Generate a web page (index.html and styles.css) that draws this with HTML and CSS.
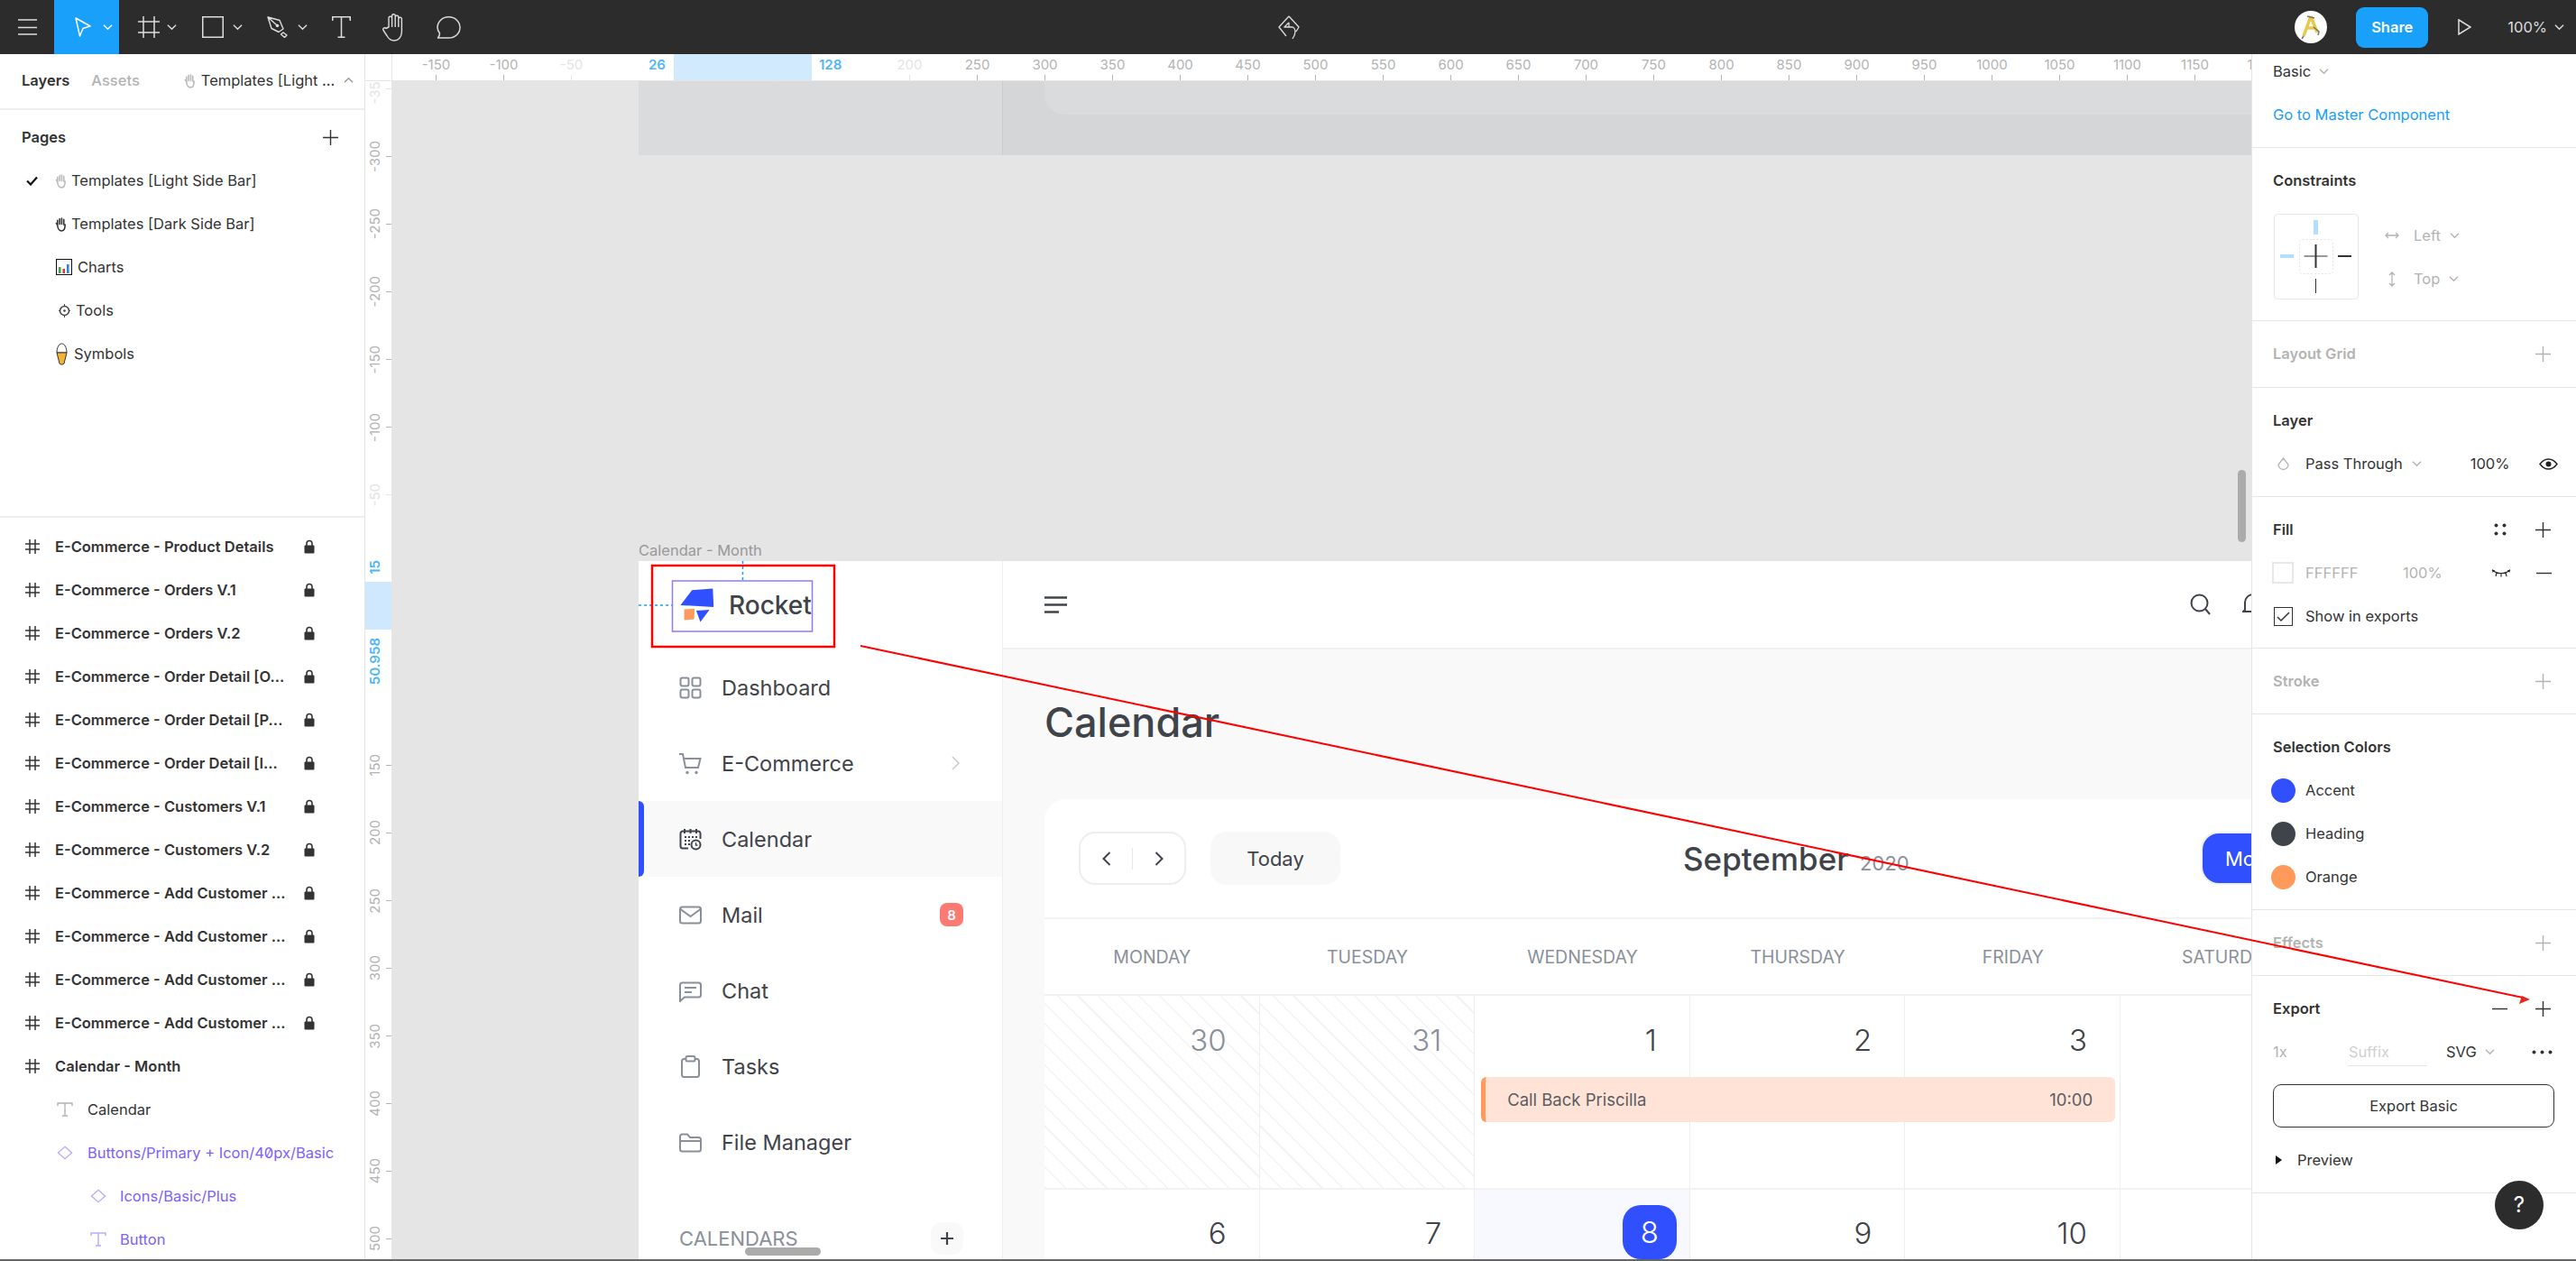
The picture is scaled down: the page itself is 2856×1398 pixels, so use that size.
FILE: index.html
```html
<!DOCTYPE html>
<html lang="en">
  <head>
    <meta charset="UTF-8" />
    <title>Calendar - Month</title>
    <link rel="stylesheet" href="styles.css">
  </head>
  <body>
    <svg class="defs" width="0" height="0">
      <symbol id="chev" viewBox="0 0 12 8"><path d="M1 1.500l5 5 5-5" fill="none" stroke="currentColor" stroke-width="1.500"/></symbol>
      <symbol id="plus" viewBox="0 0 18 18"><path d="M9 0v18M0 9h18" fill="none" stroke="currentColor" stroke-width="1.500"/></symbol>
      <symbol id="minus" viewBox="0 0 18 18"><path d="M0 9h18" fill="none" stroke="currentColor" stroke-width="1.500"/></symbol>
      <symbol id="frame" viewBox="0 0 16 16"><path d="M5 0v16M11 0v16M0 5h16M0 11h16" fill="none" stroke="currentColor" stroke-width="1.500"/></symbol>
      <symbol id="lock" viewBox="0 0 12 16"><path d="M3 7V4.500a3 3 0 0 1 6 0V7" fill="none" stroke="currentColor" stroke-width="1.600"/><rect x="0.500" y="6.500" width="11" height="9" rx="1" fill="currentColor"/></symbol>
      <symbol id="text-t" viewBox="0 0 18 16"><path d="M1 4V1h16v3M9 1v14M6 15h6" fill="none" stroke="currentColor" stroke-width="1.400"/></symbol>
      <symbol id="comp" viewBox="0 0 20 18"><path d="M10 1.500L18.500 9 10 16.500 1.500 9z" fill="none" stroke="currentColor" stroke-width="1.500"/></symbol>
      <symbol id="hand" viewBox="0 0 14 18"><path d="M3 10V4.500M5.500 9V2.500M8 9V2M10.500 9.500V3.500M3 10L1.500 8M3 10c0 4 2 7 5 7s4-3 4-7.500" fill="none" stroke="currentColor" stroke-width="1.700" stroke-linecap="round"/></symbol>
    </svg>

    <div class="app">
      <header class="toolbar">
        <div class="tool tool-menu">
          <svg width="21" height="18" viewBox="0 0 21 18"><path d="M0 1h21M0 9.500h21M0 17h21" stroke="#ddd" stroke-width="1.500"/></svg>
        </div>
        <div class="tool tool-move">
          <svg width="18" height="22" viewBox="0 0 18 22"><path d="M1 1l16 9-8 2.500L5.500 21z" fill="none" stroke="#fff" stroke-width="1.500" stroke-linejoin="round"/></svg>
          <svg class="tool-chev" width="11" height="8"><use href="#chev"/></svg>
        </div>
        <div class="tool tool-frame">
          <svg width="24" height="24" viewBox="0 0 24 24"><path d="M6 0v24M18 0v24M0 6h24M0 18h24" fill="none" stroke="#ddd" stroke-width="1.500"/></svg>
          <svg class="tool-chev" width="11" height="8"><use href="#chev"/></svg>
        </div>
        <div class="tool tool-rect">
          <svg width="24" height="24" viewBox="0 0 24 24"><rect x="0.750" y="0.750" width="22.500" height="22.500" fill="none" stroke="#ddd" stroke-width="1.500"/></svg>
          <svg class="tool-chev" width="11" height="8"><use href="#chev"/></svg>
        </div>
        <div class="tool tool-pen">
          <svg width="23" height="24" viewBox="0 0 23 24"><path d="M1 1l13 3.500 4 9.500-5 3.500-8-4zM1 1l10 9M18 18l4 3-2.500 2.500-4-3.500z" fill="none" stroke="#ddd" stroke-width="1.400" stroke-linejoin="round"/><circle cx="11.500" cy="10.500" r="1.800" fill="#ddd"/></svg>
          <svg class="tool-chev" width="11" height="8"><use href="#chev"/></svg>
        </div>
        <div class="tool tool-text">
          <svg width="21" height="24" viewBox="0 0 21 24"><path d="M.750 5V.750h19.500V5M10.500.750v22.500M6.500 23.250h8" fill="none" stroke="#ddd" stroke-width="1.500"/></svg>
        </div>
        <div class="tool tool-hand">
          <svg width="27" height="31" viewBox="0 0 27 31"><path d="M7 15V5a1.800 1.800 0 0 1 3.600 0v-2.500a1.800 1.800 0 0 1 3.600 0V4a1.800 1.800 0 0 1 3.600 0v2a1.800 1.800 0 0 1 3.600 0v14c0 6-3.500 10-8.500 10-4 0-6-2-8-5.500L1 18.500c-1-2 1.500-3.500 3-2zM10.600 5v10M14.200 3v12M17.800 5v10" fill="none" stroke="#ddd" stroke-width="1.400" stroke-linejoin="round"/></svg>
        </div>
        <div class="tool tool-comment">
          <svg width="27" height="25" viewBox="0 0 27 25"><path d="M1.500 24c1.500-1.500 2-3 2-5C2 17 1 15 1 12.500 1 6 6.500.75 13.500.75S26 6 26 12.500 20.500 24 13.500 24z" fill="none" stroke="#ddd" stroke-width="1.500" stroke-linejoin="round"/></svg>
        </div>
        <div class="tool tool-history">
          <svg width="25" height="27" viewBox="0 0 25 27"><path d="M12 1L1 13l8 10M12 1l11 12-3 5M12 8l-5 5h8c3 0 4 3 4 5s-1 5-3 8M12 8v5" fill="none" stroke="#ddd" stroke-width="1.300" stroke-linejoin="round"/></svg>
        </div>
        <div class="toolbar-right">
          <div class="avatar">
            <svg width="26" height="28" viewBox="0 0 26 28"><path d="M13 2L5 24M13 2l7 18M8 15h10" fill="none" stroke="#e9c94a" stroke-width="3.500"/><path d="M9 2l8 2M5 24l-2 3M16 14l6 5-1 4" fill="none" stroke="#77736a" stroke-width="1.500"/></svg>
          </div>
          <button class="share">Share</button>
          <svg class="play" width="15" height="18" viewBox="0 0 15 18"><path d="M1 1l13 8-13 8z" fill="none" stroke="#ddd" stroke-width="1.500"/></svg>
          <span class="zoom-level">100%</span>
          <svg class="zoom-chev" width="11" height="8"><use href="#chev"/></svg>
        </div>
      </header>

      <div class="workspace">
        <aside class="left-panel">
          <div class="tabs">
            <span class="tab tab-on">Layers</span>
            <span class="tab">Assets</span>
            <span class="tab-page">
              <svg class="hand-pale" width="13" height="17"><use href="#hand"/></svg>
              Templates [Light ...
            </span>
            <svg class="tab-caret" width="11" height="8" viewBox="0 0 12 8"><path d="M1 6.500l5-5 5 5" fill="none" stroke="#999" stroke-width="1.500"/></svg>
          </div>
          <section class="pages">
            <div class="pages-head">
              <span class="strong">Pages</span>
              <svg width="17" height="17"><use href="#plus"/></svg>
            </div>
            <div class="page-row">
              <svg class="page-check" width="13" height="11" viewBox="0 0 13 11"><path d="M1 5.500l4 4 7-8" fill="none" stroke="#111" stroke-width="2.200"/></svg>
              <svg class="page-glyph hand-pale" width="13" height="17"><use href="#hand"/></svg>
              <span>Templates [Light Side Bar]</span>
            </div>
            <div class="page-row">
              <svg class="page-glyph hand-dark" width="13" height="17"><use href="#hand"/></svg>
              <span>Templates [Dark Side Bar]</span>
            </div>
            <div class="page-row">
              <svg class="page-glyph-wide" width="18" height="18" viewBox="0 0 18 18"><rect x="0.500" y="0.500" width="17" height="17" fill="#fff" stroke="#111"/><rect x="3" y="9" width="2.500" height="7" fill="#3fa34d"/><rect x="7.500" y="11" width="2.500" height="5" fill="#e5352b"/><rect x="12" y="6" width="2.500" height="10" fill="#2d7fe0"/></svg>
              <span>Charts</span>
            </div>
            <div class="page-row">
              <svg class="page-gear" width="13" height="15" viewBox="0 0 13 15"><circle cx="6.500" cy="7.500" r="5" fill="none" stroke="#444" stroke-width="1.500"/><circle cx="6.500" cy="7.500" r="1.300" fill="#444"/><path d="M6.500 0v2.500M6.500 12.500V15M0 7.500h1.500M11.500 7.500H13" stroke="#444"/></svg>
              <span>Tools</span>
            </div>
            <div class="page-row">
              <svg class="page-glyph-cone" width="13" height="25" viewBox="0 0 13 25"><path d="M1 11c0-5 2-10 5.500-10S12 6 12 11z" fill="#fff" stroke="#333"/><path d="M1 11h11l-3 12c-1 1.500-4 1.500-5 0z" fill="#f5b335" stroke="#333"/></svg>
              <span>Symbols</span>
            </div>
          </section>
          <ul class="layers">
            <li class="layer layer-frame"><svg width="16" height="16"><use href="#frame"/></svg><span>E-Commerce - Product Details</span><svg class="lock" width="12" height="16"><use href="#lock"/></svg></li>
            <li class="layer layer-frame"><svg width="16" height="16"><use href="#frame"/></svg><span>E-Commerce - Orders V.1</span><svg class="lock" width="12" height="16"><use href="#lock"/></svg></li>
            <li class="layer layer-frame"><svg width="16" height="16"><use href="#frame"/></svg><span>E-Commerce - Orders V.2</span><svg class="lock" width="12" height="16"><use href="#lock"/></svg></li>
            <li class="layer layer-frame"><svg width="16" height="16"><use href="#frame"/></svg><span>E-Commerce - Order Detail [O...</span><svg class="lock" width="12" height="16"><use href="#lock"/></svg></li>
            <li class="layer layer-frame"><svg width="16" height="16"><use href="#frame"/></svg><span>E-Commerce - Order Detail [P...</span><svg class="lock" width="12" height="16"><use href="#lock"/></svg></li>
            <li class="layer layer-frame"><svg width="16" height="16"><use href="#frame"/></svg><span>E-Commerce - Order Detail [I...</span><svg class="lock" width="12" height="16"><use href="#lock"/></svg></li>
            <li class="layer layer-frame"><svg width="16" height="16"><use href="#frame"/></svg><span>E-Commerce - Customers V.1</span><svg class="lock" width="12" height="16"><use href="#lock"/></svg></li>
            <li class="layer layer-frame"><svg width="16" height="16"><use href="#frame"/></svg><span>E-Commerce - Customers V.2</span><svg class="lock" width="12" height="16"><use href="#lock"/></svg></li>
            <li class="layer layer-frame"><svg width="16" height="16"><use href="#frame"/></svg><span>E-Commerce - Add Customer ...</span><svg class="lock" width="12" height="16"><use href="#lock"/></svg></li>
            <li class="layer layer-frame"><svg width="16" height="16"><use href="#frame"/></svg><span>E-Commerce - Add Customer ...</span><svg class="lock" width="12" height="16"><use href="#lock"/></svg></li>
            <li class="layer layer-frame"><svg width="16" height="16"><use href="#frame"/></svg><span>E-Commerce - Add Customer ...</span><svg class="lock" width="12" height="16"><use href="#lock"/></svg></li>
            <li class="layer layer-frame"><svg width="16" height="16"><use href="#frame"/></svg><span>E-Commerce - Add Customer ...</span><svg class="lock" width="12" height="16"><use href="#lock"/></svg></li>
            <li class="layer layer-frame"><svg width="16" height="16"><use href="#frame"/></svg><span>Calendar - Month</span></li>
            <li class="layer depth-1 layer-text"><svg width="18" height="16"><use href="#text-t"/></svg><span>Calendar</span></li>
            <li class="layer depth-1 layer-comp"><svg width="18" height="16"><use href="#comp"/></svg><span>Buttons/Primary + Icon/40px/Basic</span></li>
            <li class="layer depth-2 layer-comp"><svg width="18" height="16"><use href="#comp"/></svg><span>Icons/Basic/Plus</span></li>
            <li class="layer depth-2 layer-comp layer-comp-text"><svg width="18" height="16"><use href="#text-t"/></svg><span>Button</span></li>
          </ul>
        </aside>

        <main class="stage">
          <div class="ruler-corner"></div>
          <div class="ruler-top">
            <span class="mark">-150</span><span class="mark">-100</span><span class="mark mark-faint">-50</span>
            <span class="mark mark-off"></span><span class="mark mark-off"></span><span class="mark mark-faint">100</span><span class="mark mark-off"></span>
            <span class="mark mark-faint">200</span>
            <span class="mark">250</span><span class="mark">300</span><span class="mark">350</span><span class="mark">400</span><span class="mark">450</span>
            <span class="mark">500</span><span class="mark">550</span><span class="mark">600</span><span class="mark">650</span><span class="mark">700</span>
            <span class="mark">750</span><span class="mark">800</span><span class="mark">850</span><span class="mark">900</span><span class="mark">950</span>
            <span class="mark">1000</span><span class="mark">1050</span><span class="mark">1100</span><span class="mark">1150</span><span class="mark">1200</span>
            <div class="band-top"></div>
            <span class="pick pick-26">26</span>
            <span class="pick pick-128">128</span>
          </div>
          <div class="ruler-left">
            <div class="v-list">
              <span class="vmark mark-faint"><b>-350</b></span><span class="vmark"><b>-300</b></span><span class="vmark"><b>-250</b></span><span class="vmark"><b>-200</b></span>
              <span class="vmark"><b>-150</b></span><span class="vmark"><b>-100</b></span><span class="vmark mark-faint"><b>-50</b></span>
              <span class="vmark mark-off"></span><span class="vmark mark-off"></span><span class="vmark mark-off"></span>
              <span class="vmark"><b>150</b></span><span class="vmark"><b>200</b></span><span class="vmark"><b>250</b></span><span class="vmark"><b>300</b></span>
              <span class="vmark"><b>350</b></span><span class="vmark"><b>400</b></span><span class="vmark"><b>450</b></span><span class="vmark"><b>500</b></span>
            </div>
            <div class="band-left"></div>
            <span class="vpick vpick-15">15</span>
            <span class="vpick vpick-h">50.958</span>
          </div>

          <div class="canvas">
            <div class="old-frame">
              <div class="old-side"></div>
              <div class="old-main"><div class="old-top"></div></div>
            </div>
            <div class="frame-label">Calendar - Month</div>

            <div class="design">
              <nav class="sidebar">
                <div class="logo">
                  <svg width="38" height="38" viewBox="0 0 38 38"><path d="M.4 18.900L13.300 2.200 36.300.6l.9 20.300z" fill="#304ffe"/><path d="M17.900 25.100L32.600 24 22.500 37.600z" fill="#304ffe"/><path d="M4.600 23.500L16 22.900 15.600 34.500 4.600 35.500z" fill="#ff9a5a"/></svg>
                  <span>Rocket</span>
                </div>
                <a class="nav-row">
                  <svg width="25" height="25" viewBox="0 0 25 25"><g fill="none" stroke="#8a9099" stroke-width="2"><rect x="1.500" y="1.500" width="9" height="9" rx="2"/><rect x="14.500" y="1.500" width="9" height="9" rx="2"/><rect x="1.500" y="14.500" width="9" height="9" rx="2"/><rect x="14.500" y="14.500" width="9" height="9" rx="2"/></g></svg>
                  <span>Dashboard</span>
                </a>
                <a class="nav-row">
                  <svg width="25" height="25" viewBox="0 0 25 25"><path d="M0 2h4l3 15h14l2.500-10H5" fill="none" stroke="#8a9099" stroke-width="2"/><circle cx="9" cy="22.500" r="1.700" fill="#8a9099"/><circle cx="19" cy="22.500" r="1.700" fill="#8a9099"/></svg>
                  <span>E-Commerce</span>
                  <svg class="nav-arrow" width="9" height="16" viewBox="0 0 9 16"><path d="M1 1l7 7-7 7" fill="none" stroke="#c5c8ce" stroke-width="1.500"/></svg>
                </a>
                <a class="nav-row nav-active">
                  <svg width="25" height="25" viewBox="0 0 25 25"><path d="M10 22.500H4a2.500 2.500 0 0 1-2.500-2.500V6A2.500 2.500 0 0 1 4 3.500h17A2.500 2.500 0 0 1 23.500 6v6M6 1v5M12.500 1v5M19 1v5" fill="none" stroke="#3f434a" stroke-width="2"/><path d="M6 10h2M10 10h2M14 10h2M18 10h2M6 14h2M10 14h2M6 18h2M10 18h2" stroke="#3f434a" stroke-width="2"/><circle cx="18.500" cy="18.500" r="5" fill="#f9f9fa" stroke="#3f434a" stroke-width="2"/><path d="M18.500 16v3h2" fill="none" stroke="#3f434a" stroke-width="1.300"/></svg>
                  <span>Calendar</span>
                </a>
                <a class="nav-row">
                  <svg width="25" height="25" viewBox="0 0 25 25"><rect x="1" y="3.500" width="23" height="18" rx="2.500" fill="none" stroke="#8a9099" stroke-width="2"/><path d="M1.500 6l11 8 11-8" fill="none" stroke="#8a9099" stroke-width="2"/></svg>
                  <span>Mail</span>
                  <span class="nav-badge">8</span>
                </a>
                <a class="nav-row">
                  <svg width="25" height="25" viewBox="0 0 25 25"><path d="M1 24V6a2.500 2.500 0 0 1 2.500-2.500h18A2.500 2.500 0 0 1 24 6v11a2.500 2.500 0 0 1-2.500 2.500H6z" fill="none" stroke="#8a9099" stroke-width="2"/><path d="M6 9h13M6 14h8" stroke="#8a9099" stroke-width="2"/></svg>
                  <span>Chat</span>
                </a>
                <a class="nav-row">
                  <svg width="25" height="25" viewBox="0 0 25 25"><path d="M7 4H5.500A2.500 2.500 0 0 0 3 6.500v15A2.500 2.500 0 0 0 5.500 24h14a2.500 2.500 0 0 0 2.500-2.500v-15A2.500 2.500 0 0 0 19.500 4H18" fill="none" stroke="#8a9099" stroke-width="2"/><rect x="7.500" y="1" width="10" height="5.500" rx="1.500" fill="none" stroke="#8a9099" stroke-width="2"/></svg>
                  <span>Tasks</span>
                </a>
                <a class="nav-row">
                  <svg width="25" height="25" viewBox="0 0 25 25"><path d="M1 6a2.500 2.500 0 0 1 2.500-2.500H9l3 3.500h9.500A2.500 2.500 0 0 1 24 9.500v10.500a2.500 2.500 0 0 1-2.500 2.500h-18A2.500 2.500 0 0 1 1 20zM1 11h23" fill="none" stroke="#8a9099" stroke-width="2"/></svg>
                  <span>File Manager</span>
                </a>
                <div class="cal-head">
                  <span>CALENDARS</span>
                  <span class="cal-add"><svg width="14" height="14" viewBox="0 0 14 14"><path d="M7 0v14M0 7h14" stroke="#3f434a" stroke-width="2.200"/></svg></span>
                </div>
              </nav>

              <div class="content">
                <div class="content-head">
                  <svg width="25" height="19" viewBox="0 0 25 19"><path d="M0 1.500h25M0 9.500h25M0 17.500h16" stroke="#3f434a" stroke-width="2.600"/></svg>
                  <svg class="head-search" width="23" height="24" viewBox="0 0 23 24"><circle cx="10.500" cy="10.500" r="9" fill="none" stroke="#3f434a" stroke-width="2"/><path d="M17 17l5 6" stroke="#3f434a" stroke-width="2"/></svg>
                  <svg class="head-bell" width="24" height="24" viewBox="0 0 24 24"><path d="M3 18V10a9 9 0 0 1 18 0v8l2 2H1z" fill="none" stroke="#3f434a" stroke-width="2"/></svg>
                </div>
                <div class="content-body">
                  <h1 class="page-title">Calendar</h1>
                  <div class="card">
                    <div class="card-head">
                      <div class="pager">
                        <svg width="10" height="16" viewBox="0 0 10 16"><path d="M8.500 1l-7 7 7 7" fill="none" stroke="#3f434a" stroke-width="2"/></svg>
                        <i></i>
                        <svg width="10" height="16" viewBox="0 0 10 16"><path d="M1.500 1l7 7-7 7" fill="none" stroke="#3f434a" stroke-width="2"/></svg>
                      </div>
                      <button class="today">Today</button>
                      <h2 class="month">September <small>2020</small></h2>
                      <button class="month-btn">Month</button>
                    </div>
                    <div class="weekdays">
                      <span>MONDAY</span><span>TUESDAY</span><span>WEDNESDAY</span><span>THURSDAY</span><span>FRIDAY</span><span>SATURDAY</span><span>SUNDAY</span>
                    </div>
                    <div class="weeks">
                      <div class="day day-old">30</div>
                      <div class="day day-old">31</div>
                      <div class="day">1
                        <div class="event"><span>Call Back Priscilla</span><span>10:00</span></div>
                      </div>
                      <div class="day">2</div>
                      <div class="day">3</div>
                      <div class="day"></div>
                      <div class="day"></div>
                      <div class="day day-low">6</div>
                      <div class="day day-low">7</div>
                      <div class="day day-low day-today"><b>8</b></div>
                      <div class="day day-low">9</div>
                      <div class="day day-low">10</div>
                      <div class="day day-low"></div>
                      <div class="day day-low"></div>
                    </div>
                  </div>
                </div>
              </div>
            </div>

            <div class="scroll-v"></div>
            <div class="scroll-h"></div>
          </div>
        </main>

        <aside class="right-panel">
          <section class="prop prop-top">
            <div class="prop-row row-basic">Basic <svg class="dim-chev" width="11" height="8"><use href="#chev"/></svg></div>
            <div class="prop-row prop-link">Go to Master Component</div>
          </section>
          <section class="prop prop-constraints">
            <div class="prop-title">Constraints</div>
            <div class="constraints">
              <svg width="94" height="95" viewBox="0 0 94 95">
                <rect x="0.500" y="0.500" width="93" height="94" rx="4" fill="#fff" stroke="#e5e5e5"/>
                <rect x="28.500" y="28.500" width="37" height="38" rx="3" fill="none" stroke="#e5e5e5" stroke-dasharray="2 2"/>
                <rect x="44" y="7" width="5" height="16" fill="#b3dffe"/>
                <rect x="7" y="45" width="15" height="4" fill="#b3dffe"/>
                <rect x="71" y="46" width="15" height="2" fill="#333"/>
                <rect x="46" y="72" width="1" height="16" fill="#333"/>
                <path d="M33.500 47h26" stroke="#333" stroke-width="1"/>
                <path d="M46.500 34v26" stroke="#333" stroke-width="2"/>
              </svg>
              <div class="constraint-picks">
                <div class="cpick">
                  <svg width="16" height="10" viewBox="0 0 16 10"><path d="M1 5h14M4 2L1 5l3 3M12 2l3 3-3 3" fill="none" stroke="#b3b3b3" stroke-width="1.300"/></svg>
                  <span>Left</span><svg class="dim-chev" width="11" height="8"><use href="#chev"/></svg>
                </div>
                <div class="cpick">
                  <svg width="16" height="17" viewBox="0 0 16 17"><path d="M8 1v15M5 4l3-3 3 3M5 13l3 3 3-3" fill="none" stroke="#b3b3b3" stroke-width="1.300"/></svg>
                  <span>Top</span><svg class="dim-chev" width="11" height="8"><use href="#chev"/></svg>
                </div>
              </div>
            </div>
          </section>
          <section class="prop prop-grid prop-off">
            <div class="prop-title">Layout Grid<svg class="sec-plus" width="17" height="17"><use href="#plus"/></svg></div>
          </section>
          <section class="prop prop-layer">
            <div class="prop-title">Layer</div>
            <div class="prop-row">
              <svg class="drop" width="13" height="15" viewBox="0 0 13 15"><path d="M6.500 1L12 8a5.500 5.500 0 0 1-11 0z" fill="none" stroke="#b3b3b3" stroke-width="1.300"/></svg>
              <span>Pass Through</span>
              <svg class="dim-chev" width="11" height="8"><use href="#chev"/></svg>
              <span class="pct">100%</span>
              <svg class="eye" width="21" height="13" viewBox="0 0 21 13"><path d="M1 6.500C4 2.500 7 1 10.500 1S17 2.500 20 6.500C17 10.500 14 12 10.500 12S4 10.500 1 6.500z" fill="none" stroke="#222" stroke-width="1.400"/><circle cx="10.500" cy="6.500" r="3" fill="#222"/></svg>
            </div>
          </section>
          <section class="prop prop-fill">
            <div class="prop-title">Fill
              <svg class="sec-dots" width="14" height="14" viewBox="0 0 14 14"><g fill="#333"><circle cx="2.500" cy="2.500" r="2"/><circle cx="11.500" cy="2.500" r="2"/><circle cx="2.500" cy="11.500" r="2"/><circle cx="11.500" cy="11.500" r="2"/></g></svg>
              <svg class="sec-plus" width="17" height="17"><use href="#plus"/></svg>
            </div>
            <div class="prop-row row-fill">
              <i class="swatch"></i>
              <span class="hex">FFFFFF</span>
              <span class="hex-pct">100%</span>
              <svg class="eye-shut" width="22" height="10" viewBox="0 0 22 10"><path d="M1 2c3 2.500 6 3.500 10 3.500S18 4.500 21 2M1 2l3 1M21 2l-3 1M6 5l-1 4M11 6v3.500M16 5l1 4M1 4l3-1M21 4l-3-1" fill="none" stroke="#222" stroke-width="1.100"/></svg>
              <svg class="row-minus" width="17" height="17"><use href="#minus"/></svg>
            </div>
            <div class="prop-row">
              <svg class="check" width="21" height="21" viewBox="0 0 21 21"><rect x="0.500" y="0.500" width="20" height="20" fill="#fff" stroke="#333"/><path d="M4 11l4 4 9-9" fill="none" stroke="#333" stroke-width="1.500"/></svg>
              <span>Show in exports</span>
            </div>
          </section>
          <section class="prop prop-short prop-off">
            <div class="prop-title">Stroke<svg class="sec-plus" width="17" height="17"><use href="#plus"/></svg></div>
          </section>
          <section class="prop prop-colors">
            <div class="prop-title">Selection Colors</div>
            <div class="prop-row"><i class="dot dot-accent"></i>Accent</div>
            <div class="prop-row"><i class="dot dot-heading"></i>Heading</div>
            <div class="prop-row"><i class="dot dot-orange"></i>Orange</div>
          </section>
          <section class="prop prop-short prop-off">
            <div class="prop-title">Effects<svg class="sec-plus" width="17" height="17"><use href="#plus"/></svg></div>
          </section>
          <section class="prop prop-export">
            <div class="prop-title">Export
              <svg class="sec-minus" width="17" height="17"><use href="#minus"/></svg>
              <svg class="sec-plus" width="17" height="17"><use href="#plus"/></svg>
            </div>
            <div class="prop-row row-export">
              <span class="scale">1x</span>
              <span class="suffix">Suffix</span>
              <span class="fmt">SVG</span>
              <svg class="dim-chev" width="11" height="8"><use href="#chev"/></svg>
              <svg class="more" width="23" height="5" viewBox="0 0 23 5"><g fill="#333"><circle cx="2.500" cy="2.500" r="2"/><circle cx="11.500" cy="2.500" r="2"/><circle cx="20.500" cy="2.500" r="2"/></g></svg>
            </div>
            <button class="export-btn">Export Basic</button>
            <div class="prop-row row-preview">
              <svg width="7" height="10" viewBox="0 0 7 10"><path d="M0 0l7 5-7 5z" fill="#111"/></svg>
              <span>Preview</span>
            </div>
          </section>
        </aside>
      </div>

      <div class="help">?</div>

      <svg class="marks" width="2856" height="1398" viewBox="0 0 2856 1398">
        <path d="M708 671h37M823.500 622v21" fill="none" stroke="#18a0fb" stroke-width="1.500" stroke-dasharray="3 3"/>
        <rect x="745.500" y="644" width="155" height="56" fill="none" stroke="#8c7bff" stroke-width="1.500"/>
        <rect x="723" y="627" width="202" height="90" fill="none" stroke="#f00" stroke-width="2.500"/>
        <path d="M954 716L2797 1106" stroke="#f00" stroke-width="2"/>
        <path d="M2805 1108l-9-4-3 9z" fill="#e0281c"/>
      </svg>
    </div>
  </body>
</html>
```

FILE: styles.css
```css
* {
  box-sizing: border-box;
}
html,
body {
  margin: 0;
  height: 100%;
  overflow: hidden;
}
body {
  font-family: Inter, "Liberation Sans", sans-serif;
  font-size: 16.5px;
  color: #333;
  background: #fff;
}
button {
  font-family: inherit;
}
.defs {
  position: absolute;
}
.app {
  position: relative;
  display: flex;
  flex-direction: column;
  width: 2856px;
  height: 1398px;
  border-bottom: 2px solid #666;
  overflow: hidden;
}

/* top bar */
.toolbar {
  flex: none;
  display: flex;
  align-items: center;
  height: 60px;
  background: #2c2c2c;
  color: #ddd;
}
.tool {
  flex: none;
  display: flex;
  align-items: center;
  height: 60px;
}
.tool-menu {
  width: 60px;
  padding-left: 20px;
}
.tool-move {
  width: 72px;
  padding-left: 23px;
  background: #18a0fb;
  color: #fff;
}
.tool-chev {
  margin-left: 13px;
}
.tool-frame {
  width: 72px;
  padding-left: 21px;
}
.tool-frame .tool-chev {
  margin-left: 8px;
}
.tool-rect {
  width: 72px;
  padding-left: 20px;
}
.tool-rect .tool-chev {
  margin-left: 10px;
}
.tool-pen {
  width: 72px;
  padding-left: 20px;
}
.tool-pen .tool-chev {
  margin-left: 11px;
}
.tool-text {
  width: 56px;
  padding-left: 20px;
}
.tool-hand {
  width: 60px;
  padding-left: 20px;
}
.tool-comment {
  width: 60px;
  padding-left: 20px;
}
.tool-history {
  margin-left: 893px;
}
.toolbar-right {
  display: flex;
  align-items: center;
  margin-left: auto;
  padding-right: 13px;
}
.avatar {
  display: flex;
  align-items: center;
  justify-content: center;
  width: 36px;
  height: 36px;
  border-radius: 50%;
  background: #fff;
}
.share {
  width: 80px;
  height: 45px;
  margin-left: 32px;
  border: 0;
  border-radius: 9px;
  background: #18a0fb;
  color: #fff;
  font-size: 16.5px;
  font-weight: 600;
}
.play {
  margin-left: 33px;
}
.zoom-level {
  margin-left: 40px;
  color: #ddd;
}
.zoom-chev {
  margin-left: 8px;
}

/* layers side */
.workspace {
  flex: 1;
  display: flex;
  min-height: 0;
}
.left-panel {
  flex: none;
  width: 405px;
  border-right: 1px solid #e5e5e5;
  background: #fff;
}
.tabs {
  display: flex;
  align-items: center;
  height: 62px;
  padding: 0 0 2px 24px;
  border-bottom: 2px solid #eee;
}
.tab {
  margin-right: 24px;
  color: #b3b3b3;
  font-weight: 500;
}
.tab-on {
  color: #333;
  font-weight: 600;
}
.tab-page {
  display: flex;
  align-items: center;
  gap: 6px;
  margin-left: 25px;
  white-space: nowrap;
}
.tab-caret {
  margin-left: 10px;
}
.hand-pale {
  color: #b9b9b9;
}
.hand-dark {
  color: #333;
}
.strong {
  font-weight: 600;
}
.pages {
  height: 452px;
  padding-top: 18px;
  border-bottom: 2px solid #eee;
}
.pages-head {
  display: flex;
  align-items: center;
  justify-content: space-between;
  height: 24px;
  margin-bottom: 12px;
  padding: 0 29px 0 24px;
}
.page-row {
  position: relative;
  display: flex;
  align-items: center;
  height: 48px;
  padding-left: 61px;
}
.page-row svg {
  flex: none;
}
.page-check {
  position: absolute;
  left: 29px;
}
.page-glyph {
  margin-right: 5px;
}
.page-glyph-wide {
  margin: 0 6px 0 1px;
}
.page-gear {
  margin: 0 6px 0 4px;
}
.page-glyph-cone {
  margin: 0 7px 0 1px;
}
.layers {
  margin: 0;
  padding: 8px 0 0;
  list-style: none;
}
.layer {
  display: flex;
  align-items: center;
  gap: 17px;
  height: 48px;
  padding-left: 28px;
  white-space: nowrap;
}
.layer svg {
  flex: none;
}
.layer span {
  width: 260px;
  color: #333;
}
.layer-frame span {
  font-weight: 600;
}
.lock {
  margin-left: -1px;
}
.depth-1 {
  padding-left: 63px;
  gap: 16px;
}
.depth-2 {
  padding-left: 100px;
  gap: 15px;
}
.layer-text svg {
  color: #b3b3b3;
}
.layer-comp svg {
  color: #b9aaff;
}
.layer-comp span {
  color: #7b61ff;
  font-feature-settings: "zero";
}

/* rulers */
.stage {
  flex: 1;
  display: grid;
  grid-template-columns: 30px 1fr;
  grid-template-rows: 30px 1fr;
  min-width: 0;
  overflow: hidden;
}
.ruler-corner {
  border-bottom: 1px solid #e5e5e5;
  border-right: 1px solid #e5e5e5;
}
.ruler-top {
  position: relative;
  display: flex;
  padding-left: 11px;
  overflow: hidden;
  border-bottom: 1px solid #e5e5e5;
  background: #fff;
  font-size: 15px;
}
.mark {
  position: relative;
  flex: none;
  width: 75px;
  padding-top: 2px;
  line-height: 19px;
  color: #b3b3b3;
  text-align: center;
}
.mark::after {
  content: "";
  position: absolute;
  left: 37px;
  bottom: 0;
  width: 1px;
  height: 6px;
  background: #b3b3b3;
}
.band-top {
  position: absolute;
  left: 312px;
  top: 0;
  bottom: 0;
  width: 153px;
  background: rgba(207, 232, 253, 0.93);
}
.pick {
  position: absolute;
  top: 2px;
  line-height: 19px;
  color: #4db5fc;
  font-weight: 600;
}
.pick-26 {
  left: 284px;
}
.pick-128 {
  left: 473px;
}
.ruler-left {
  position: relative;
  overflow: hidden;
  border-right: 1px solid #e5e5e5;
  background: #fff;
  font-size: 15px;
}
.v-list {
  display: flex;
  flex-direction: column;
  margin-top: -29px;
}
.vmark {
  position: relative;
  flex: none;
  display: flex;
  align-items: center;
  height: 75px;
  padding-left: 1px;
  color: #b3b3b3;
}
.vmark b {
  width: 19px;
  font-weight: 400;
  line-height: 19px;
  writing-mode: vertical-rl;
  transform: rotate(180deg);
  text-align: center;
}
.vmark::after {
  content: "";
  position: absolute;
  right: 0;
  top: 37px;
  width: 6px;
  height: 1px;
  background: #b3b3b3;
}
.mark-off::after {
  display: none;
}
.mark-faint {
  color: #e4e4e4;
}
.mark-faint::after {
  background: #e4e4e4;
}
.band-left {
  position: absolute;
  left: 0;
  top: 555px;
  width: 29px;
  height: 53px;
  background: #cfe8fd;
}
.vpick {
  position: absolute;
  left: 1px;
  width: 19px;
  line-height: 19px;
  color: #4db5fc;
  font-weight: 600;
  writing-mode: vertical-rl;
  transform: rotate(180deg);
}
.vpick-15 {
  top: 531px;
}
.vpick-h {
  top: 617px;
}

/* canvas */
.canvas {
  position: relative;
  overflow: hidden;
  background: #e5e5e5;
}
.old-frame {
  position: absolute;
  left: 273px;
  top: 0;
  display: flex;
  width: 2100px;
  height: 82px;
}
.old-side {
  flex: none;
  width: 404px;
  border-right: 1px solid #cbccce;
  background: #dadbdd;
}
.old-main {
  flex: 1;
  padding-left: 46px;
  background: #d5d6d8;
}
.old-top {
  height: 37px;
  border-bottom-left-radius: 22px;
  background: #dadbdd;
}
.frame-label {
  position: absolute;
  left: 273px;
  top: 510px;
  line-height: 20px;
  color: #999;
  font-size: 16.5px;
}
.design {
  position: absolute;
  left: 273px;
  top: 532px;
  display: flex;
  width: 2100px;
  height: 774px;
  background: #fff;
  color: #3f434a;
}
.sidebar {
  flex: none;
  width: 404px;
  border-right: 1px solid #eee;
  background: #fff;
}
.logo {
  display: flex;
  align-items: center;
  gap: 16px;
  height: 98px;
  padding-left: 46px;
  font-size: 28px;
  font-weight: 500;
}
.nav-row {
  position: relative;
  display: flex;
  align-items: center;
  gap: 22px;
  height: 84px;
  padding: 0 43px 0 45px;
  font-size: 23.5px;
}
.nav-row svg {
  flex: none;
}
.nav-active {
  background: #f9f9fa;
}
.nav-active::before {
  content: "";
  position: absolute;
  left: 0;
  top: 0;
  bottom: 0;
  width: 6px;
  border-radius: 0 6px 6px 0;
  background: #304ffe;
}
.nav-arrow {
  margin-left: auto;
  margin-right: 4px;
}
.nav-badge {
  display: flex;
  align-items: center;
  justify-content: center;
  width: 26px;
  height: 26px;
  margin-left: auto;
  border-radius: 8px;
  background: #fc7a72;
  color: #fff;
  font-size: 15px;
  font-weight: 600;
}
.cal-head {
  display: flex;
  align-items: center;
  justify-content: space-between;
  height: 36px;
  margin-top: 47px;
  padding: 0 43px 0 45px;
  color: #8a9099;
  font-size: 22px;
}
.cal-add {
  display: flex;
  align-items: center;
  justify-content: center;
  width: 36px;
  height: 36px;
  border-radius: 12px;
  background: #f9f9fa;
}
.content {
  flex: 1;
  min-width: 0;
}
.content-head {
  display: flex;
  align-items: center;
  height: 98px;
  padding-left: 46px;
  border-bottom: 2px solid #f2f2f2;
}
.content-head svg {
  flex: none;
}
.head-search {
  margin-left: 1245px;
}
.head-bell {
  margin-left: 35px;
}
.content-body {
  height: 676px;
  padding: 52px 0 0 46px;
  background: #f9f9fa;
}
.page-title {
  height: 114px;
  margin: 0;
  padding-top: 4px;
  font-size: 45px;
  line-height: 50px;
  font-weight: 500;
}
.card {
  width: 1670px;
  border-radius: 24px 24px 0 0;
  background: #fff;
}
.card-head {
  display: flex;
  align-items: center;
  height: 133px;
  padding-left: 38px;
  border-bottom: 2px solid #f2f2f2;
}
.pager {
  display: flex;
  align-items: center;
  justify-content: space-evenly;
  width: 119px;
  height: 59px;
  border: 2px solid #eee;
  border-radius: 18px;
}
.pager i {
  width: 1px;
  height: 24px;
  background: #e8e8e8;
}
.today {
  width: 144px;
  height: 59px;
  margin-left: 27px;
  border: 0;
  border-radius: 18px;
  background: #f8f8f8;
  color: #3f434a;
  font-size: 22px;
}
.month {
  width: 251px;
  margin: 0 0 0 380px;
  white-space: nowrap;
  font-size: 35px;
  font-weight: 500;
}
.month small {
  margin-left: 3px;
  color: #8a9099;
  font-size: 22px;
  font-weight: 400;
}
.month-btn {
  width: 140px;
  height: 55px;
  margin-left: 325px;
  padding-left: 25px;
  border: 0;
  border-radius: 18px;
  background: #304ffe;
  box-shadow: 0 0 0 2px #eef0f5;
  color: #fff;
  font-size: 22px;
  text-align: left;
}
.weekdays {
  display: grid;
  grid-template-columns: repeat(7, 238.6px);
  align-items: center;
  height: 85px;
  border-bottom: 2px solid #f2f2f2;
  color: #8a9099;
  font-size: 19.5px;
  text-align: center;
}
.weeks {
  display: grid;
  grid-template-columns: repeat(7, 238.6px);
  grid-template-rows: 215px 100px;
}
.day {
  padding: 33px 36px 0 0;
  border-right: 1px solid #eee;
  border-bottom: 2px solid #f2f2f2;
  font-size: 33px;
  line-height: 32px;
  font-weight: 300;
  text-align: right;
}
.day-old {
  color: #8a9099;
  background: repeating-linear-gradient(45deg, #f3f3f4 0 1.5px, #fff 1.5px 16px);
}
.day-low {
  border-bottom: 0;
  padding-top: 32px;
}
.day-today {
  padding: 17px 14px 0 0;
  background: #f8f9fe;
}
.day-today b {
  display: inline-block;
  width: 60px;
  height: 60px;
  border-radius: 20px;
  background: #304ffe;
  color: #fff;
  font-weight: 300;
  line-height: 60px;
  text-align: center;
}
.event {
  position: relative;
  display: flex;
  align-items: center;
  justify-content: space-between;
  width: 703px;
  height: 50px;
  margin: 25px 0 0 7px;
  padding: 0 25px 0 24px;
  border-left: 5px solid #ff9a5a;
  border-radius: 6px;
  background: #ffe3d6;
  color: #595d62;
  font-size: 18.5px;
  line-height: normal;
  font-weight: 400;
  text-align: left;
}

/* scrollbars */
.scroll-v {
  position: absolute;
  right: 6px;
  top: 431px;
  width: 9px;
  height: 80px;
  border-radius: 5px;
  background: #ababab;
}
.scroll-h {
  position: absolute;
  left: 391px;
  bottom: 4px;
  width: 84px;
  height: 9px;
  border-radius: 5px;
  background: #ababab;
}

/* properties side */
.right-panel {
  flex: none;
  width: 360px;
  border-left: 1px solid #e5e5e5;
  background: #fff;
}
.prop {
  position: relative;
  padding: 12px 23px 0;
  border-bottom: 1px solid #e5e5e5;
}
.prop-top {
  height: 104px;
  padding-top: 0;
}
.prop-constraints {
  height: 192px;
}
.prop-grid {
  height: 74px;
}
.prop-short {
  height: 73px;
}
.prop-layer {
  height: 121px;
}
.prop-fill {
  height: 168px;
}
.prop-colors {
  height: 217px;
}
.prop-export {
  height: 241px;
}
.prop-off .prop-title {
  color: #b3b3b3;
}
.prop-title {
  display: flex;
  align-items: center;
  height: 48px;
  font-weight: 600;
}
.prop-row {
  display: flex;
  align-items: center;
  height: 48px;
  white-space: nowrap;
}
.row-basic {
  height: 38px;
  margin-bottom: 5px;
  gap: 9px;
}
.prop-link {
  color: #18a0fb;
}
.dim-chev {
  flex: none;
  color: #b3b3b3;
}
.sec-plus {
  position: absolute;
  right: 28px;
}
.sec-minus {
  position: absolute;
  right: 76px;
}
.sec-dots {
  position: absolute;
  right: 77px;
}
.constraints {
  display: flex;
  margin-top: 13px;
  padding-left: 1px;
}
.constraint-picks {
  padding-left: 29px;
}
.cpick {
  display: flex;
  align-items: center;
  height: 48px;
  color: #b3b3b3;
}
.cpick span {
  margin: 0 10px 0 16px;
}
.drop {
  flex: none;
  margin: 0 18px 0 5px;
}
.prop-layer .dim-chev {
  margin-left: 10px;
}
.pct {
  margin-left: 54px;
}
.eye {
  flex: none;
  margin-left: 33px;
}
.row-fill {
  color: #b3b3b3;
}
.swatch {
  flex: none;
  width: 24px;
  height: 24px;
  margin-left: -1px;
  border: 2px solid #e8e8e8;
}
.hex {
  width: 108px;
  margin-left: 13px;
}
.hex-pct {
  width: 98px;
}
.row-minus {
  flex: none;
  margin-left: 28px;
  color: #333;
}
.check {
  flex: none;
  margin: 0 14px 0 1px;
}
.dot {
  flex: none;
  width: 27px;
  height: 27px;
  margin: 0 11px 0 -2px;
  border-radius: 50%;
}
.dot-accent {
  background: #304ffe;
}
.dot-heading {
  background: #3f434a;
}
.dot-orange {
  background: #ff9a5a;
}
.scale {
  flex: none;
  width: 83px;
  color: #b3b3b3;
}
.suffix {
  flex: none;
  width: 88px;
  height: 32px;
  margin-right: 21px;
  padding-left: 1px;
  border-bottom: 1px solid #e5e5e5;
  color: #d0d0d0;
  line-height: 32px;
}
.fmt {
  margin-right: 9px;
}
.more {
  flex: none;
  margin-left: 41px;
}
.export-btn {
  display: block;
  width: 312px;
  height: 48px;
  margin-top: 12px;
  border: 1.5px solid #333;
  border-radius: 9px;
  background: #fff;
  color: #333;
  font-size: 16.5px;
}
.row-preview {
  gap: 17px;
  margin-top: 12px;
  padding-left: 3px;
}
.help {
  position: absolute;
  left: 2766px;
  top: 1309px;
  width: 54px;
  height: 54px;
  border-radius: 50%;
  background: #2c2c2c;
  color: #fff;
  font-size: 24px;
  line-height: 54px;
  text-align: center;
}
.marks {
  position: absolute;
  left: 0;
  top: 0;
  pointer-events: none;
}
```
